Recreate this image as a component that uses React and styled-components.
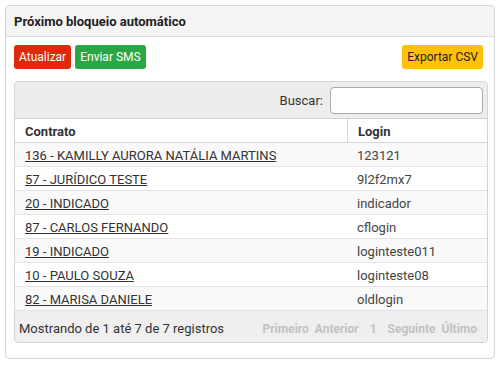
import React from "react";
import styled, { createGlobalStyle } from "styled-components";

const Global = createGlobalStyle`
  html, body { margin: 0; padding: 0; background: #fff; }
  body { padding: 5px; font-family: Roboto, "Liberation Sans", Arial, sans-serif; color: #333; }
  * { box-sizing: border-box; }
`;

const Panel = styled.div`
  width: 490px;
  height: 354px;
  border: 1px solid #d6d6d6;
  border-radius: 4px;
  background: #fff;
  display: flex;
  flex-direction: column;
`;

const PanelHeader = styled.div`
  height: 32px;
  background: #f5f5f5;
  border-bottom: 1px solid #dddddd;
  border-radius: 3px 3px 0 0;
  padding: 1px 8px 0;
  display: flex;
  align-items: center;
  font-size: 13px;
  font-weight: 700;
  color: #222;
`;

const PanelBody = styled.div`
  padding: 8px 6px 15px 8px;
  display: flex;
  flex-direction: column;
  gap: 12px;
`;

const Toolbar = styled.div`
  display: flex;
  gap: 4px;
  padding-right: 5px;
`;

const Spacer = styled.div`
  flex: 1;
`;

const colors = {
  red: { bg: "#dd2a0b", fg: "#fff" },
  green: { bg: "#2aa744", fg: "#fff" },
  yellow: { bg: "#fec107", fg: "#222" },
};

const Button = styled.button`
  height: 24px;
  padding: 0 5px;
  border: none;
  border-radius: 3px;
  font-family: inherit;
  font-size: 12px;
  background: ${(p) => colors[p.$variant].bg};
  color: ${(p) => colors[p.$variant].fg};
  cursor: pointer;
`;

const TableBox = styled.div`
  border: 1px solid #d3d3d3;
  border-radius: 4px;
  overflow: hidden;
`;

const SearchBar = styled.div`
  height: 37px;
  background: #ededed;
  border-bottom: 1px solid #d3d3d3;
  display: flex;
  align-items: center;
  justify-content: flex-end;
  gap: 7px;
  padding: 1px 4px 0 0;
  font-size: 13px;
  color: #333;
`;

const SearchInput = styled.input`
  width: 153px;
  height: 27px;
  border: 1px solid #aaa;
  border-radius: 4px;
  background: #fff;
  outline: none;
`;

const Table = styled.table`
  width: 100%;
  border-collapse: separate;
  border-spacing: 0;
  font-size: 13px;
`;

const Th = styled.th`
  height: 24px;
  text-align: left;
  padding: 2px 10px 0;
  font-weight: 700;
  color: #333;
  border-bottom: 1px solid #d8d8d8;
  border-left: ${(p) => (p.$divider ? "1px solid #d8d8d8" : "none")};
  width: ${(p) => p.$w || "auto"};
`;

const Tr = styled.tr`
  background: ${(p) => (p.$odd ? "#f9f9f9" : "#fff")};
`;

const Td = styled.td`
  height: 24px;
  padding: 2px 10px 0;
  border-bottom: 1px solid #e3e3e3;
  color: #444;
`;

const Link = styled.a`
  color: #333;
  text-decoration: underline;
  cursor: pointer;
`;

const Footer = styled.div`
  height: 31px;
  background: #efefef;
  display: flex;
  align-items: center;
  justify-content: space-between;
  padding: 4px 10px 0 4px;
  font-size: 13px;
  color: #333;
`;

const Pager = styled.div`
  display: flex;
  gap: 6px;
  font-size: 12px;
  font-weight: 700;
  color: #c2c2c2;
`;

const PageNum = styled.span`
  padding: 0 5px;
`;

const rows = [
  ["136 - KAMILLY AURORA NATÁLIA MARTINS", "123121"],
  ["57 - JURÍDICO TESTE", "9l2f2mx7"],
  ["20 - INDICADO", "indicador"],
  ["87 - CARLOS FERNANDO", "cflogin"],
  ["19 - INDICADO", "loginteste011"],
  ["10 - PAULO SOUZA", "loginteste08"],
  ["82 - MARISA DANIELE", "oldlogin"],
];

export default function App() {
  return (
    <>
      <Global />
      <Panel>
        <PanelHeader>Próximo bloqueio automático</PanelHeader>
        <PanelBody>
          <Toolbar>
            <Button $variant="red">Atualizar</Button>
            <Button $variant="green">Enviar SMS</Button>
            <Spacer />
            <Button $variant="yellow">Exportar CSV</Button>
          </Toolbar>
          <TableBox>
            <SearchBar>
              <span>Buscar:</span>
              <SearchInput type="text" />
            </SearchBar>
            <Table>
              <thead>
                <tr>
                  <Th>Contrato</Th>
                  <Th $divider $w="140px">Login</Th>
                </tr>
              </thead>
              <tbody>
                {rows.map(([c, l], i) => (
                  <Tr key={c} $odd={i % 2 === 0}>
                    <Td><Link>{c}</Link></Td>
                    <Td>{l}</Td>
                  </Tr>
                ))}
              </tbody>
            </Table>
            <Footer>
              <span>Mostrando de 1 até 7 de 7 registros</span>
              <Pager>
                <span>Primeiro</span>
                <span>Anterior</span>
                <PageNum>1</PageNum>
                <span>Seguinte</span>
                <span>Último</span>
              </Pager>
            </Footer>
          </TableBox>
        </PanelBody>
      </Panel>
    </>
  );
}
